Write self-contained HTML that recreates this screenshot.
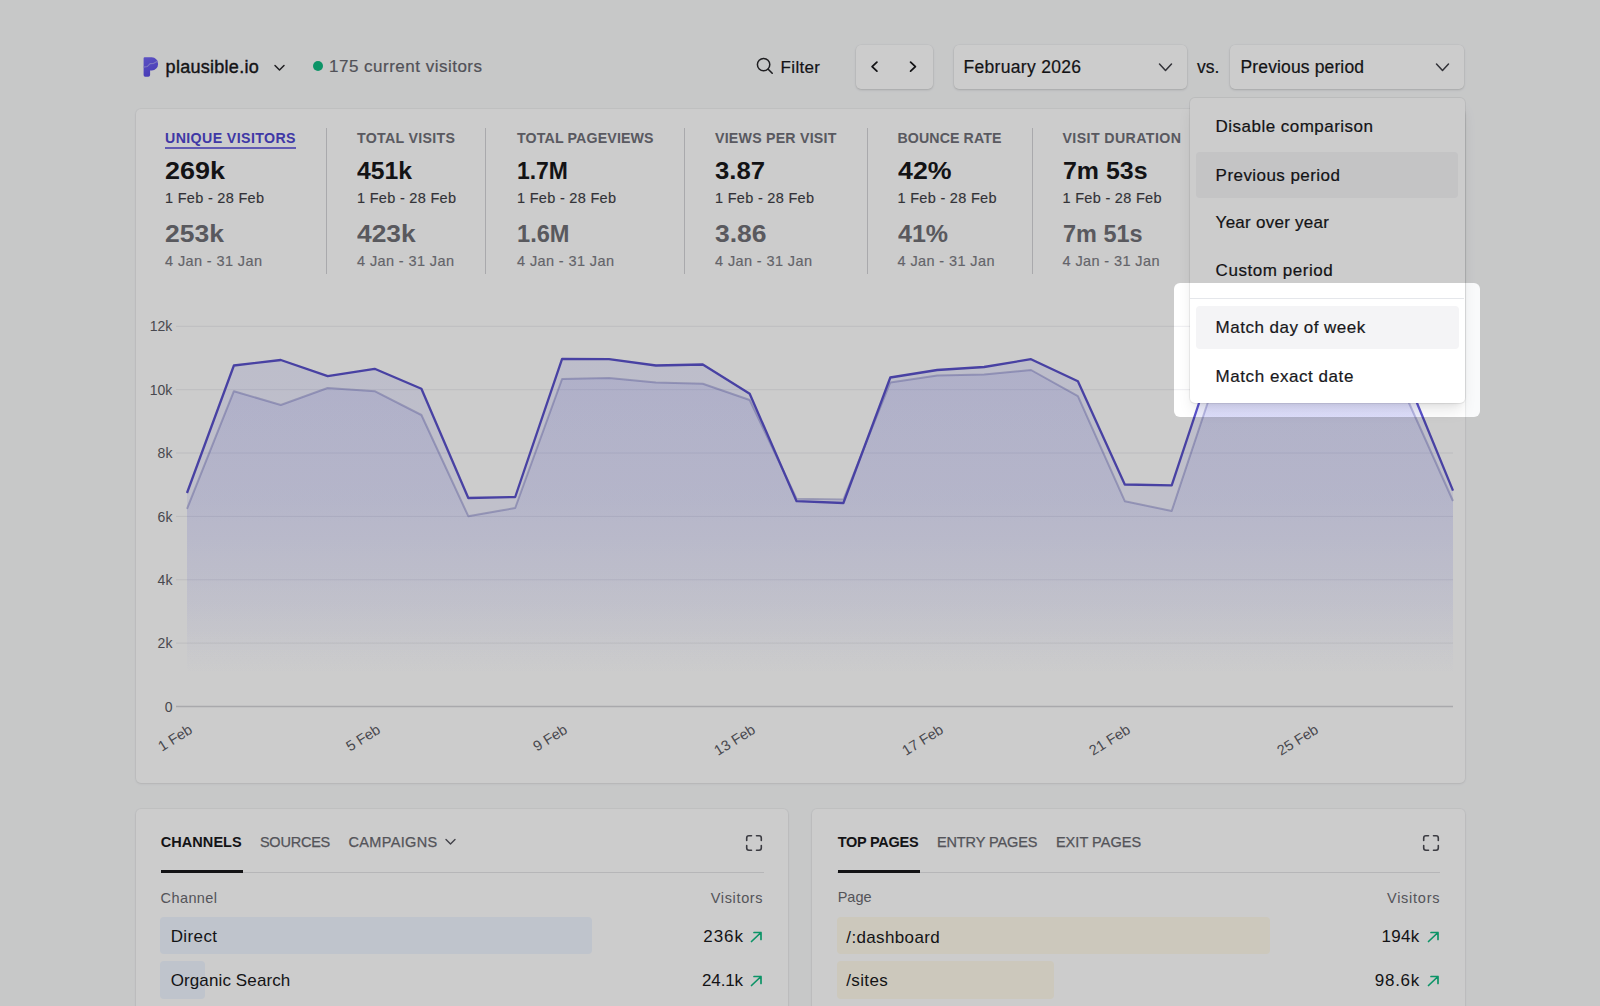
<!DOCTYPE html><html><head><meta charset="utf-8"><style>
html,body{margin:0;padding:0;width:1600px;height:1006px;overflow:hidden;background:#f9fafb;font-family:"Liberation Sans",sans-serif;}
.t{position:absolute;white-space:nowrap;line-height:1;}
.abs{position:absolute;}
.card{position:absolute;background:#fff;border-radius:5px;box-shadow:0 1px 3px rgba(0,0,0,0.07),0 0 0 1px rgba(0,0,0,0.03);}
.btn{position:absolute;background:#fff;border-radius:5px;box-shadow:0 1px 3px rgba(0,0,0,0.10),0 1px 2px rgba(0,0,0,0.06),0 0 0 0.5px rgba(0,0,0,0.04);}
</style></head><body>
<svg class="abs" style="left:142.5px;top:56.5px" width="16" height="20" viewBox="0 0 16 20">
<defs><linearGradient id="lg" x1="0" y1="0" x2="0.3" y2="1"><stop offset="0" stop-color="#7366f4"/><stop offset="1" stop-color="#5b4ce6"/></linearGradient></defs>
<path d="M0.6,1.2 Q0.6,0.3 1.6,0.3 H8.8 A6.3,6.6 0 0 1 15.1,6.9 A6.3,6.6 0 0 1 8.8,13.4 H7.1 V17.9 Q7.1,19.7 5.2,19.7 H2.2 Q0.6,19.7 0.6,18 Z" fill="url(#lg)"/>
<path d="M0.6,10.1 L4.2,9.6 L7.2,6.6 L10.4,6.5 L14.9,4" fill="none" stroke="#9d95f2" stroke-width="1.1"/>
</svg>
<div class="t" style="left:165.60px;top:57.70px;font-size:18px;color:#18181b;letter-spacing:0.277px;-webkit-text-stroke:0.4px currentColor;">plausible.io</div>
<svg class="abs" style="left:273px;top:63px" width="13" height="9" viewBox="0 0 13 9"><path d="M2,2.5 L6.5,7 L11,2.5" fill="none" stroke="#27272a" stroke-width="1.5" stroke-linecap="round" stroke-linejoin="round"/></svg>
<div class="abs" style="left:313px;top:61.2px;width:10px;height:10px;border-radius:50%;background:#10b981"></div>
<div class="t" style="left:329.00px;top:58.05px;font-size:17px;color:#66666e;letter-spacing:0.495px;-webkit-text-stroke:0.2px currentColor;">175 current visitors</div>
<svg class="abs" style="left:756px;top:57px" width="18" height="18" viewBox="0 0 18 18"><circle cx="7.6" cy="7.6" r="6.2" fill="none" stroke="#27272a" stroke-width="1.5"/><path d="M12.2,12.2 L16.2,16.2" stroke="#27272a" stroke-width="1.6" stroke-linecap="round"/></svg>
<div class="t" style="left:780.60px;top:58.55px;font-size:17px;color:#18181b;letter-spacing:0.320px;-webkit-text-stroke:0.2px currentColor;">Filter</div>
<div class="btn" style="left:856px;top:45px;width:77px;height:44px"></div>
<svg class="abs" style="left:866px;top:58px" width="56" height="17" viewBox="0 0 56 17"><path d="M10.9,4.1 L6.1,8.6 L10.9,13.1" fill="none" stroke="#18181b" stroke-width="1.8" stroke-linecap="round" stroke-linejoin="round"/><path d="M44.6,4.1 L49.4,8.6 L44.6,13.1" fill="none" stroke="#18181b" stroke-width="1.8" stroke-linecap="round" stroke-linejoin="round"/></svg>
<div class="btn" style="left:953.5px;top:44.5px;width:233px;height:44px"></div>
<div class="t" style="left:963.40px;top:58.53px;font-size:17.5px;color:#18181b;letter-spacing:0.317px;-webkit-text-stroke:0.2px currentColor;">February 2026</div>
<svg class="abs" style="left:1158px;top:62px" width="15" height="11" viewBox="0 0 15 11"><path d="M1.5,2 L7.5,8.5 L13.5,2" fill="none" stroke="#3f3f46" stroke-width="1.5" stroke-linecap="round" stroke-linejoin="round"/></svg>
<div class="t" style="left:1197.00px;top:58.62px;font-size:17.5px;color:#18181b;letter-spacing:0.050px;-webkit-text-stroke:0.2px currentColor;">vs.</div>
<div class="btn" style="left:1230px;top:44.5px;width:233.5px;height:44px"></div>
<div class="t" style="left:1240.50px;top:58.62px;font-size:17.5px;color:#18181b;letter-spacing:0.136px;-webkit-text-stroke:0.2px currentColor;">Previous period</div>
<svg class="abs" style="left:1435px;top:62px" width="15" height="11" viewBox="0 0 15 11"><path d="M1.5,2 L7.5,8.5 L13.5,2" fill="none" stroke="#3f3f46" stroke-width="1.5" stroke-linecap="round" stroke-linejoin="round"/></svg>
<div class="card" style="left:136px;top:109px;width:1329px;height:674px"></div>
<div class="t" style="left:165.00px;top:130.93px;font-size:14.2px;font-weight:700;color:#4f46d0;letter-spacing:0.393px;">UNIQUE VISITORS</div>
<div class="t" style="left:165.00px;top:158.60px;font-size:24px;font-weight:700;color:#18181b;letter-spacing:0.000px;transform:scaleX(1.1236);transform-origin:0.00px 0;">269k</div>
<div class="t" style="left:165.00px;top:190.88px;font-size:14.5px;color:#3f3f46;letter-spacing:0.300px;-webkit-text-stroke:0.15px currentColor;">1 Feb - 28 Feb</div>
<div class="t" style="left:165.00px;top:223.00px;font-size:23.3px;font-weight:700;color:#707076;letter-spacing:0.000px;transform:scaleX(1.1368);transform-origin:0.00px 0;">253k</div>
<div class="t" style="left:165.00px;top:253.68px;font-size:14.5px;color:#7c7c84;letter-spacing:0.392px;-webkit-text-stroke:0.15px currentColor;">4 Jan - 31 Jan</div>
<div class="t" style="left:357.00px;top:130.93px;font-size:14.2px;font-weight:700;color:#707078;letter-spacing:0.300px;">TOTAL VISITS</div>
<div class="t" style="left:357.00px;top:158.60px;font-size:24px;font-weight:700;color:#18181b;letter-spacing:0.000px;transform:scaleX(1.0300);transform-origin:0.00px 0;">451k</div>
<div class="t" style="left:357.00px;top:190.88px;font-size:14.5px;color:#3f3f46;letter-spacing:0.300px;-webkit-text-stroke:0.15px currentColor;">1 Feb - 28 Feb</div>
<div class="t" style="left:357.00px;top:223.00px;font-size:23.3px;font-weight:700;color:#707076;letter-spacing:0.000px;transform:scaleX(1.1320);transform-origin:0.00px 0;">423k</div>
<div class="t" style="left:357.00px;top:253.68px;font-size:14.5px;color:#7c7c84;letter-spacing:0.392px;-webkit-text-stroke:0.15px currentColor;">4 Jan - 31 Jan</div>
<div class="t" style="left:517.00px;top:130.93px;font-size:14.2px;font-weight:700;color:#707078;letter-spacing:0.146px;">TOTAL PAGEVIEWS</div>
<div class="t" style="left:517.00px;top:158.60px;font-size:24px;font-weight:700;color:#18181b;letter-spacing:0.000px;transform:scaleX(0.9551);transform-origin:0.00px 0;">1.7M</div>
<div class="t" style="left:517.00px;top:190.88px;font-size:14.5px;color:#3f3f46;letter-spacing:0.300px;-webkit-text-stroke:0.15px currentColor;">1 Feb - 28 Feb</div>
<div class="t" style="left:517.00px;top:223.00px;font-size:23.3px;font-weight:700;color:#707076;letter-spacing:0.000px;transform:scaleX(1.0135);transform-origin:0.00px 0;">1.6M</div>
<div class="t" style="left:517.00px;top:253.68px;font-size:14.5px;color:#7c7c84;letter-spacing:0.392px;-webkit-text-stroke:0.15px currentColor;">4 Jan - 31 Jan</div>
<div class="t" style="left:715.00px;top:130.93px;font-size:14.2px;font-weight:700;color:#707078;letter-spacing:0.221px;">VIEWS PER VISIT</div>
<div class="t" style="left:715.00px;top:158.60px;font-size:24px;font-weight:700;color:#18181b;letter-spacing:0.000px;transform:scaleX(1.0707);transform-origin:0.00px 0;">3.87</div>
<div class="t" style="left:715.00px;top:190.88px;font-size:14.5px;color:#3f3f46;letter-spacing:0.300px;-webkit-text-stroke:0.15px currentColor;">1 Feb - 28 Feb</div>
<div class="t" style="left:715.00px;top:223.00px;font-size:23.3px;font-weight:700;color:#707076;letter-spacing:0.000px;transform:scaleX(1.1369);transform-origin:0.00px 0;">3.86</div>
<div class="t" style="left:715.00px;top:253.68px;font-size:14.5px;color:#7c7c84;letter-spacing:0.392px;-webkit-text-stroke:0.15px currentColor;">4 Jan - 31 Jan</div>
<div class="t" style="left:897.50px;top:130.93px;font-size:14.2px;font-weight:700;color:#707078;letter-spacing:0.090px;">BOUNCE RATE</div>
<div class="t" style="left:897.50px;top:158.60px;font-size:24px;font-weight:700;color:#18181b;letter-spacing:0.000px;transform:scaleX(1.1146);transform-origin:0.00px 0;">42%</div>
<div class="t" style="left:897.50px;top:190.88px;font-size:14.5px;color:#3f3f46;letter-spacing:0.300px;-webkit-text-stroke:0.15px currentColor;">1 Feb - 28 Feb</div>
<div class="t" style="left:897.50px;top:223.00px;font-size:23.3px;font-weight:700;color:#707076;letter-spacing:0.000px;transform:scaleX(1.0730);transform-origin:0.00px 0;">41%</div>
<div class="t" style="left:897.50px;top:253.68px;font-size:14.5px;color:#7c7c84;letter-spacing:0.392px;-webkit-text-stroke:0.15px currentColor;">4 Jan - 31 Jan</div>
<div class="t" style="left:1062.50px;top:130.93px;font-size:14.2px;font-weight:700;color:#707078;letter-spacing:0.400px;">VISIT DURATION</div>
<div class="t" style="left:1062.50px;top:158.60px;font-size:24px;font-weight:700;color:#18181b;letter-spacing:0.000px;transform:scaleX(1.0381);transform-origin:0.00px 0;">7m 53s</div>
<div class="t" style="left:1062.50px;top:190.88px;font-size:14.5px;color:#3f3f46;letter-spacing:0.300px;-webkit-text-stroke:0.15px currentColor;">1 Feb - 28 Feb</div>
<div class="t" style="left:1062.50px;top:223.00px;font-size:23.3px;font-weight:700;color:#707076;letter-spacing:0.000px;transform:scaleX(1.0063);transform-origin:0.00px 0;">7m 51s</div>
<div class="t" style="left:1062.50px;top:253.68px;font-size:14.5px;color:#7c7c84;letter-spacing:0.392px;-webkit-text-stroke:0.15px currentColor;">4 Jan - 31 Jan</div>
<div class="abs" style="left:165px;top:147px;width:131px;height:2px;background:#7b72e0"></div>
<div class="abs" style="left:325.5px;top:128px;width:1px;height:146px;background:#d4d4d8"></div>
<div class="abs" style="left:485.0px;top:128px;width:1px;height:146px;background:#d4d4d8"></div>
<div class="abs" style="left:683.5px;top:128px;width:1px;height:146px;background:#d4d4d8"></div>
<div class="abs" style="left:866.5px;top:128px;width:1px;height:146px;background:#d4d4d8"></div>
<div class="abs" style="left:1031.5px;top:128px;width:1px;height:146px;background:#d4d4d8"></div>
<svg class="abs" style="left:0;top:0" width="1600" height="1006" viewBox="0 0 1600 1006">
<defs>
<linearGradient id="gm" gradientUnits="userSpaceOnUse" x1="0" y1="340" x2="0" y2="676"><stop offset="0" stop-color="#6366f1" stop-opacity="0.12"/><stop offset="0.478" stop-color="#6366f1" stop-opacity="0.095"/><stop offset="0.716" stop-color="#6366f1" stop-opacity="0.058"/><stop offset="0.836" stop-color="#6366f1" stop-opacity="0.034"/><stop offset="0.93" stop-color="#6366f1" stop-opacity="0.01"/><stop offset="1" stop-color="#6366f1" stop-opacity="0"/></linearGradient>
<linearGradient id="gc" gradientUnits="userSpaceOnUse" x1="0" y1="340" x2="0" y2="676"><stop offset="0" stop-color="#6366f1" stop-opacity="0.13"/><stop offset="0.478" stop-color="#6366f1" stop-opacity="0.095"/><stop offset="0.716" stop-color="#6366f1" stop-opacity="0.058"/><stop offset="0.836" stop-color="#6366f1" stop-opacity="0.034"/><stop offset="0.93" stop-color="#6366f1" stop-opacity="0.01"/><stop offset="1" stop-color="#6366f1" stop-opacity="0"/></linearGradient>
</defs>
<line x1="176" y1="326.3" x2="1453" y2="326.3" stroke="#ededf0" stroke-width="1"/><line x1="176" y1="389.7" x2="1453" y2="389.7" stroke="#ededf0" stroke-width="1"/><line x1="176" y1="453.0" x2="1453" y2="453.0" stroke="#ededf0" stroke-width="1"/><line x1="176" y1="516.4" x2="1453" y2="516.4" stroke="#ededf0" stroke-width="1"/><line x1="176" y1="579.8" x2="1453" y2="579.8" stroke="#ededf0" stroke-width="1"/><line x1="176" y1="643.1" x2="1453" y2="643.1" stroke="#ededf0" stroke-width="1"/><line x1="176" y1="706.5" x2="1453" y2="706.5" stroke="#d4d4d8" stroke-width="1.4"/>
<polygon points="187,706.5 187.0,493.0 233.9,365.5 280.8,360.0 327.7,376.2 374.6,368.8 421.4,388.8 468.3,498.0 515.2,497.0 562.1,358.8 609.0,359.2 655.9,365.5 702.8,364.5 749.7,393.8 796.6,501.2 843.4,503.0 890.3,377.5 937.2,370.0 984.1,367.0 1031.0,359.2 1077.9,381.2 1124.8,484.5 1171.7,485.3 1218.6,344.0 1265.4,350.0 1312.3,356.0 1359.2,352.0 1406.1,376.5 1453.0,490.6 1453,706.5" fill="url(#gm)"/>
<polygon points="187,706.5 187.0,508.8 233.9,391.2 280.8,405.0 327.7,388.0 374.6,391.2 421.4,415.0 468.3,516.2 515.2,508.0 562.1,379.0 609.0,378.0 655.9,382.5 702.8,383.8 749.7,400.0 796.6,498.8 843.4,499.5 890.3,382.5 937.2,375.5 984.1,374.5 1031.0,370.0 1077.9,396.2 1124.8,501.2 1171.7,511.0 1218.6,370.0 1265.4,372.0 1312.3,378.0 1359.2,375.0 1406.1,396.5 1453.0,501.0 1453,706.5" fill="url(#gc)"/>
<polyline points="187.0,508.8 233.9,391.2 280.8,405.0 327.7,388.0 374.6,391.2 421.4,415.0 468.3,516.2 515.2,508.0 562.1,379.0 609.0,378.0 655.9,382.5 702.8,383.8 749.7,400.0 796.6,498.8 843.4,499.5 890.3,382.5 937.2,375.5 984.1,374.5 1031.0,370.0 1077.9,396.2 1124.8,501.2 1171.7,511.0 1218.6,370.0 1265.4,372.0 1312.3,378.0 1359.2,375.0 1406.1,396.5 1453.0,501.0" fill="none" stroke="rgba(80,80,170,0.33)" stroke-width="2" stroke-linejoin="round"/>
<polyline points="187.0,493.0 233.9,365.5 280.8,360.0 327.7,376.2 374.6,368.8 421.4,388.8 468.3,498.0 515.2,497.0 562.1,358.8 609.0,359.2 655.9,365.5 702.8,364.5 749.7,393.8 796.6,501.2 843.4,503.0 890.3,377.5 937.2,370.0 984.1,367.0 1031.0,359.2 1077.9,381.2 1124.8,484.5 1171.7,485.3 1218.6,344.0 1265.4,350.0 1312.3,356.0 1359.2,352.0 1406.1,376.5 1453.0,490.6" fill="none" stroke="#5a52cc" stroke-width="2.3" stroke-linejoin="round"/>
</svg>
<div class="t" style="left:149.80px;top:319.40px;font-size:14px;color:#5b5b63;letter-spacing:0.000px;">12k</div>
<div class="t" style="left:149.80px;top:382.77px;font-size:14px;color:#5b5b63;letter-spacing:0.000px;">10k</div>
<div class="t" style="left:157.60px;top:446.14px;font-size:14px;color:#5b5b63;letter-spacing:0.000px;">8k</div>
<div class="t" style="left:157.60px;top:509.51px;font-size:14px;color:#5b5b63;letter-spacing:0.000px;">6k</div>
<div class="t" style="left:157.60px;top:572.88px;font-size:14px;color:#5b5b63;letter-spacing:0.000px;">4k</div>
<div class="t" style="left:157.60px;top:636.25px;font-size:14px;color:#5b5b63;letter-spacing:0.000px;">2k</div>
<div class="t" style="left:164.70px;top:699.62px;font-size:14px;color:#5b5b63;letter-spacing:0.000px;">0</div>
<div class="t" style="left:187.3px;top:721.5px;font-size:14.5px;color:#71717a;color:#5b5b63;transform:translateX(-100%) rotate(-32deg);transform-origin:100% 0;">1 Feb</div>
<div class="t" style="left:374.85555555555555px;top:721.5px;font-size:14.5px;color:#71717a;color:#5b5b63;transform:translateX(-100%) rotate(-32deg);transform-origin:100% 0;">5 Feb</div>
<div class="t" style="left:562.411111111111px;top:721.5px;font-size:14.5px;color:#71717a;color:#5b5b63;transform:translateX(-100%) rotate(-32deg);transform-origin:100% 0;">9 Feb</div>
<div class="t" style="left:749.9666666666666px;top:721.5px;font-size:14.5px;color:#71717a;color:#5b5b63;transform:translateX(-100%) rotate(-32deg);transform-origin:100% 0;">13 Feb</div>
<div class="t" style="left:937.5222222222221px;top:721.5px;font-size:14.5px;color:#71717a;color:#5b5b63;transform:translateX(-100%) rotate(-32deg);transform-origin:100% 0;">17 Feb</div>
<div class="t" style="left:1125.0777777777778px;top:721.5px;font-size:14.5px;color:#71717a;color:#5b5b63;transform:translateX(-100%) rotate(-32deg);transform-origin:100% 0;">21 Feb</div>
<div class="t" style="left:1312.6333333333332px;top:721.5px;font-size:14.5px;color:#71717a;color:#5b5b63;transform:translateX(-100%) rotate(-32deg);transform-origin:100% 0;">25 Feb</div>
<div class="card" style="left:136px;top:808.5px;width:652px;height:260px"></div>
<div class="card" style="left:812px;top:808.5px;width:653px;height:260px"></div>
<div class="t" style="left:160.75px;top:834.67px;font-size:14.5px;font-weight:700;color:#18181b;letter-spacing:0.057px;">CHANNELS</div>
<div class="t" style="left:259.90px;top:834.67px;font-size:14.5px;color:#696970;letter-spacing:-0.217px;-webkit-text-stroke:0.25px currentColor;">SOURCES</div>
<div class="t" style="left:348.50px;top:834.67px;font-size:14.5px;color:#696970;letter-spacing:0.337px;-webkit-text-stroke:0.25px currentColor;">CAMPAIGNS</div>
<svg class="abs" style="left:444px;top:837px" width="13" height="10" viewBox="0 0 13 10"><path d="M2,2.5 L6.5,7 L11,2.5" fill="none" stroke="#52525b" stroke-width="1.4" stroke-linecap="round" stroke-linejoin="round"/></svg>
<div class="abs" style="left:160.5px;top:871.5px;width:603px;height:1px;background:#e4e4e7"></div>
<div class="abs" style="left:160.5px;top:870px;width:82px;height:3px;background:#18181b"></div>
<div class="t" style="left:160.60px;top:890.88px;font-size:14.5px;color:#696970;letter-spacing:0.400px;">Channel</div>
<div class="t" style="left:710.80px;top:890.67px;font-size:14.5px;color:#696970;letter-spacing:0.643px;">Visitors</div>
<div class="abs" style="left:160.3px;top:917px;width:432px;height:37px;border-radius:4px;background:#eff6ff"></div>
<div class="abs" style="left:160.3px;top:961px;width:45px;height:38px;border-radius:4px;background:#eff6ff"></div>
<div class="t" style="left:170.70px;top:928.15px;font-size:17px;color:#18181b;letter-spacing:0.380px;">Direct</div>
<div class="t" style="left:170.70px;top:971.95px;font-size:17px;color:#18181b;letter-spacing:0.115px;">Organic Search</div>
<div class="t" style="left:703.20px;top:928.15px;font-size:17px;color:#18181b;letter-spacing:1.000px;">236k</div>
<div class="t" style="left:702.00px;top:972.05px;font-size:17px;color:#18181b;letter-spacing:-0.125px;">24.1k</div>
<svg class="abs" style="left:744.5px;top:833.5px" width="18" height="18" viewBox="0 0 18 18"><path d="M1.7,6.5 V3.9 Q1.7,1.7 3.9,1.7 H6.5 M11.5,1.7 H14.1 Q16.3,1.7 16.3,3.9 V6.5 M16.3,11.5 V14.1 Q16.3,16.3 14.1,16.3 H11.5 M6.5,16.3 H3.9 Q1.7,16.3 1.7,14.1 V11.5" fill="none" stroke="#4a4a52" stroke-width="1.6" stroke-linecap="round" stroke-linejoin="round"/></svg>
<svg class="abs" style="left:750px;top:931px" width="13" height="12" viewBox="0 0 13 12"><path d="M1.5,10.5 L11,1.5 M4,1.5 H11 V8.5" fill="none" stroke="#10b981" stroke-width="1.7" stroke-linecap="round" stroke-linejoin="round"/></svg>
<svg class="abs" style="left:750px;top:975px" width="13" height="12" viewBox="0 0 13 12"><path d="M1.5,10.5 L11,1.5 M4,1.5 H11 V8.5" fill="none" stroke="#10b981" stroke-width="1.7" stroke-linecap="round" stroke-linejoin="round"/></svg>
<div class="t" style="left:837.70px;top:834.67px;font-size:14.5px;font-weight:700;color:#18181b;letter-spacing:-0.250px;">TOP PAGES</div>
<div class="t" style="left:936.90px;top:834.67px;font-size:14.5px;color:#696970;letter-spacing:-0.090px;-webkit-text-stroke:0.25px currentColor;">ENTRY PAGES</div>
<div class="t" style="left:1055.90px;top:834.67px;font-size:14.5px;color:#696970;letter-spacing:0.044px;-webkit-text-stroke:0.25px currentColor;">EXIT PAGES</div>
<div class="abs" style="left:837px;top:871.5px;width:603px;height:1px;background:#e4e4e7"></div>
<div class="abs" style="left:837.5px;top:870px;width:82px;height:3px;background:#18181b"></div>
<div class="t" style="left:837.70px;top:890.47px;font-size:14.5px;color:#696970;letter-spacing:0.000px;">Page</div>
<div class="t" style="left:1387.00px;top:890.67px;font-size:14.5px;color:#696970;letter-spacing:0.743px;">Visitors</div>
<div class="abs" style="left:836.6px;top:917px;width:433px;height:37px;border-radius:4px;background:#fffbeb"></div>
<div class="abs" style="left:836.6px;top:961px;width:217px;height:38px;border-radius:4px;background:#fffbeb"></div>
<div class="t" style="left:846.30px;top:928.55px;font-size:17px;color:#18181b;letter-spacing:0.360px;">/:dashboard</div>
<div class="t" style="left:846.30px;top:971.95px;font-size:17px;color:#18181b;letter-spacing:0.340px;">/sites</div>
<div class="t" style="left:1381.40px;top:928.15px;font-size:17px;color:#18181b;letter-spacing:0.333px;">194k</div>
<div class="t" style="left:1374.80px;top:972.05px;font-size:17px;color:#18181b;letter-spacing:0.725px;">98.6k</div>
<svg class="abs" style="left:1421.5px;top:833.5px" width="18" height="18" viewBox="0 0 18 18"><path d="M1.7,6.5 V3.9 Q1.7,1.7 3.9,1.7 H6.5 M11.5,1.7 H14.1 Q16.3,1.7 16.3,3.9 V6.5 M16.3,11.5 V14.1 Q16.3,16.3 14.1,16.3 H11.5 M6.5,16.3 H3.9 Q1.7,16.3 1.7,14.1 V11.5" fill="none" stroke="#4a4a52" stroke-width="1.6" stroke-linecap="round" stroke-linejoin="round"/></svg>
<svg class="abs" style="left:1427px;top:931px" width="13" height="12" viewBox="0 0 13 12"><path d="M1.5,10.5 L11,1.5 M4,1.5 H11 V8.5" fill="none" stroke="#10b981" stroke-width="1.7" stroke-linecap="round" stroke-linejoin="round"/></svg>
<svg class="abs" style="left:1427px;top:975px" width="13" height="12" viewBox="0 0 13 12"><path d="M1.5,10.5 L11,1.5 M4,1.5 H11 V8.5" fill="none" stroke="#10b981" stroke-width="1.7" stroke-linecap="round" stroke-linejoin="round"/></svg>
<div class="abs" style="left:1189.5px;top:97.5px;width:275px;height:305.5px;background:#fff;border-radius:5px;box-shadow:0 0 0 1px rgba(0,0,0,0.06),0 10px 15px -3px rgba(0,0,0,0.1),0 4px 6px -4px rgba(0,0,0,0.1)"></div>
<div class="abs" style="left:1195.5px;top:152px;width:262.2px;height:45.5px;border-radius:4px;background:#f5f5f7"></div>
<div class="abs" style="left:1190px;top:298.3px;width:274px;height:1px;background:#e5e7eb"></div>
<div class="abs" style="left:1196px;top:305.5px;width:262.5px;height:43.5px;border-radius:4px;background:#f4f4f6"></div>
<div class="t" style="left:1215.60px;top:118.35px;font-size:17px;color:#18181b;letter-spacing:0.471px;-webkit-text-stroke:0.2px currentColor;">Disable comparison</div>
<div class="t" style="left:1215.60px;top:166.55px;font-size:17px;color:#18181b;letter-spacing:0.443px;-webkit-text-stroke:0.2px currentColor;">Previous period</div>
<div class="t" style="left:1215.60px;top:214.35px;font-size:17px;color:#18181b;letter-spacing:0.262px;-webkit-text-stroke:0.2px currentColor;">Year over year</div>
<div class="t" style="left:1215.60px;top:262.35px;font-size:17px;color:#18181b;letter-spacing:0.542px;-webkit-text-stroke:0.2px currentColor;">Custom period</div>
<div class="t" style="left:1215.60px;top:319.45px;font-size:17px;color:#18181b;letter-spacing:0.494px;-webkit-text-stroke:0.2px currentColor;">Match day of week</div>
<div class="t" style="left:1215.60px;top:367.55px;font-size:17px;color:#18181b;letter-spacing:0.553px;-webkit-text-stroke:0.2px currentColor;">Match exact date</div>
<div class="abs" style="left:1173.8px;top:283px;width:306.2px;height:133.5px;border-radius:6px;box-shadow:0 0 0 4000px rgba(0,0,0,0.2)"></div>
</body></html>
